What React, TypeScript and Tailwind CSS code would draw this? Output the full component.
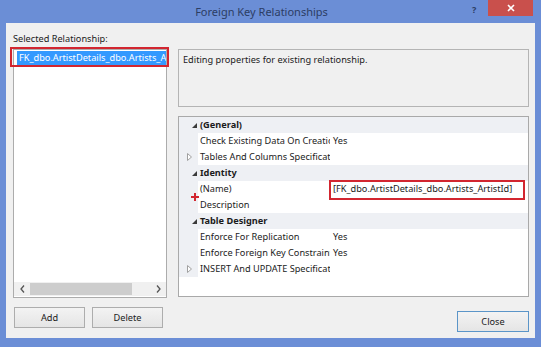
import React from "react";

const font = "font-['Noto_Sans','Open_Sans',sans-serif]";

type Row =
  | { kind: "cat"; label: string }
  | { kind: "prop"; label: string; value?: string; collapsed?: boolean };

const rows: Row[] = [
  { kind: "cat", label: "(General)" },
  { kind: "prop", label: "Check Existing Data On Creation Or Re-Enabling", value: "Yes" },
  { kind: "prop", label: "Tables And Columns Specification", collapsed: true },
  { kind: "cat", label: "Identity" },
  { kind: "prop", label: "(Name)", value: "[FK_dbo.ArtistDetails_dbo.Artists_ArtistId]" },
  { kind: "prop", label: "Description" },
  { kind: "cat", label: "Table Designer" },
  { kind: "prop", label: "Enforce For Replication", value: "Yes" },
  { kind: "prop", label: "Enforce Foreign Key Constraint", value: "Yes" },
  { kind: "prop", label: "INSERT And UPDATE Specification", collapsed: true },
];

const Expanded = () => (
  <svg width="5" height="5" viewBox="0 0 5 5" className="block">
    <polygon points="5,0 5,5 0,5" fill="#3a3a3a" />
  </svg>
);

const Collapsed = () => (
  <svg width="5" height="8" viewBox="0 0 5 8" className="block">
    <polygon points="0.5,0.5 4.5,4 0.5,7.5" fill="#fff" stroke="#a0a0a0" strokeWidth="1" />
  </svg>
);

const Button = ({ label, className }: { label: string; className: string }) => (
  <div
    className={`h-[21px] flex items-center justify-center border bg-gradient-to-b from-[#f3f3f3] to-[#e5e5e5] text-[#1b1b1b] ${className}`}
  >
    {label}
  </div>
);

const PropertyGrid = () => (
  <div className="relative h-[181px] border border-[#a9a9a9] bg-white">
    {rows.map((row, i) =>
      row.kind === "cat" ? (
        <div key={i} className="h-[16px] flex items-center bg-[#eef0f4]">
          <div className="w-[21px] flex justify-end pr-[3px]">
            <Expanded />
          </div>
          <span className="font-bold leading-none">{row.label}</span>
        </div>
      ) : (
        <div key={i} className="h-[16px] flex items-center">
          <div className="w-[19px] self-stretch bg-[#eef0f4] flex items-center pl-[8px]">
            {row.collapsed ? <Collapsed /> : null}
          </div>
          <div className="w-[132px] pl-[2px] overflow-hidden whitespace-nowrap leading-none">
            {row.label}
          </div>
          <div className="flex-1 pl-[3px] whitespace-nowrap leading-none">{row.value}</div>
        </div>
      )
    )}
    {/* red annotations */}
    <div className="absolute left-[150px] top-[63px] w-[196px] h-[20px] border-2 border-[#d22630]" />
    <svg width="8" height="8" viewBox="0 0 8 8" className="absolute left-[12px] top-[76px]">
      <path d="M4 0V8M0 4H8" stroke="#d22630" strokeWidth="2" />
    </svg>
  </div>
);

export default function App() {
  return (
    <div className={`w-[541px] h-[347px] bg-[#6b8ed6] flex flex-col overflow-hidden ${font}`}>
      <div className="relative h-[23px] flex items-center justify-center pr-[18px]">
        <span className="text-[11px] text-[#2c3d64] leading-none">Foreign Key Relationships</span>
        <span className="absolute left-[472px] top-[3px] text-[9px] font-bold text-[#2c3d64]">?</span>
        <div className="absolute left-[488px] top-0 w-[45px] h-[16px] bg-[#c9504c] flex items-center justify-center">
          <svg width="8" height="8" viewBox="0 0 8 8">
            <path d="M1 1L7 7M7 1L1 7" stroke="#fff" strokeWidth="1.6" />
          </svg>
        </div>
      </div>

      <div className="relative mx-[6px] h-[315px] bg-[#f0f0f0] text-[9.2px] text-[#1b1b1b] flex flex-col">
        <div className="h-[26px] pl-[7px] pt-[10px] leading-[12px]">Selected Relationship:</div>
        <div className="flex pl-[7px] gap-[11px]">
          <div className="w-[154px] flex flex-col">
            <div className="h-[249px] border border-[#acacac] bg-white flex flex-col">
              <div className="pt-[1px] pl-[3px] flex-1">
                <div className="h-[14px] bg-[#3399ff] text-white pl-[2px] leading-[14px] whitespace-nowrap overflow-hidden">
                  FK_dbo.ArtistDetails_dbo.Artists_ArtistId
                </div>
              </div>
              <div className="h-[14px] mb-[1px] flex items-center bg-[#f0f0f0]">
                <div className="w-[16px] flex justify-center">
                  <svg width="5" height="8" viewBox="0 0 5 8">
                    <path d="M4 0.5L1 4L4 7.5" fill="none" stroke="#555" strokeWidth="1.3" />
                  </svg>
                </div>
                <div className="w-[102px] h-[12px] bg-[#cdcdcd]" />
                <div className="flex-1 flex justify-end pr-[5px]">
                  <svg width="5" height="8" viewBox="0 0 5 8">
                    <path d="M1 0.5L4 4L1 7.5" fill="none" stroke="#555" strokeWidth="1.3" />
                  </svg>
                </div>
              </div>
            </div>
            <div className="flex gap-[7px] pl-[1px] mt-[9px]">
              <Button label="Add" className="w-[71px] border-[#adadad]" />
              <Button label="Delete" className="w-[71px] border-[#adadad]" />
            </div>
          </div>

          <div className="w-[351px] flex flex-col">
            <div className="h-[58px] border border-[#b4b4b4] pl-[4px] pt-[4px] leading-[12px]">
              Editing properties for existing relationship.
            </div>
            <div className="mt-[9px]">
              <PropertyGrid />
            </div>
            <div className="flex justify-end mt-[14px]">
              <Button label="Close" className="w-[72px] border-[#5b95c8]" />
            </div>
          </div>
        </div>
        <div className="absolute left-[4px] top-[24px] w-[159px] h-[20px] border-2 border-[#d22630]" />
      </div>
    </div>
  );
}
